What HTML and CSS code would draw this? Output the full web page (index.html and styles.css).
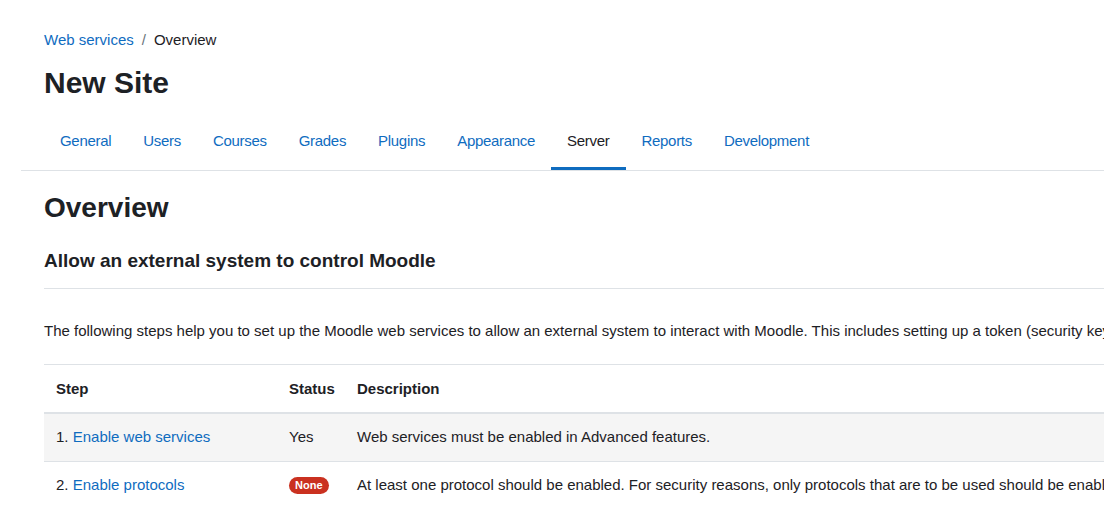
FILE: index.html
```html
<!DOCTYPE html>
<html lang="en">

<head>
    <meta charset="UTF-8">
    <meta name="viewport" content="width=device-width, initial-scale=1.0">
    <title>Web services: Overview</title>
    <link rel="stylesheet" href="styles.css">
</head>

<body>
    <div class="page-header">
        <nav class="breadcrumb">
            <a href="#">Web services</a>
            <span class="divider">/</span>
            <span>Overview</span>
        </nav>
        <h1 class="site-title">New Site</h1>
    </div>

    <div class="secondary-nav">
        <ul class="tabs">
            <li><a href="#">General</a></li>
            <li><a href="#">Users</a></li>
            <li><a href="#">Courses</a></li>
            <li><a href="#">Grades</a></li>
            <li><a href="#">Plugins</a></li>
            <li><a href="#">Appearance</a></li>
            <li><a href="#" class="active">Server</a></li>
            <li><a href="#">Reports</a></li>
            <li><a href="#">Development</a></li>
        </ul>
    </div>

    <div class="main">
        <h2 class="page-title">Overview</h2>
        <h3 class="section-title">Allow an external system to control Moodle</h3>
        <p class="intro">The following steps help you to set up the Moodle web services to allow an external system to interact with Moodle. This includes setting up a token (security key) authentication method.</p>

        <table class="steps">
            <thead>
                <tr>
                    <th class="col-step">Step</th>
                    <th class="col-status">Status</th>
                    <th>Description</th>
                </tr>
            </thead>
            <tbody>
                <tr>
                    <td>1. <a href="#">Enable web services</a></td>
                    <td class="col-status">Yes</td>
                    <td>Web services must be enabled in Advanced features.</td>
                </tr>
                <tr>
                    <td>2. <a href="#">Enable protocols</a></td>
                    <td class="col-status"><span class="badge">None</span></td>
                    <td>At least one protocol should be enabled. For security reasons, only protocols that are to be used should be enabled.</td>
                </tr>
            </tbody>
        </table>
    </div>
</body>

</html>
```

FILE: styles.css
```css
* {
    margin: 0;
    padding: 0;
    box-sizing: border-box;
}

html,
body {
    font-family: "Liberation Sans", Arial, sans-serif;
    font-size: 15px;
    line-height: 1.5;
    color: #1d2125;
    background: #fff;
    overflow: hidden;
}

a {
    color: #0f6cbf;
    text-decoration: none;
}

.page-header {
    padding: 29px 0 0 44px;
}

.breadcrumb {
    display: flex;
    gap: 8px;
    white-space: nowrap;
}

.breadcrumb .divider {
    color: #6a737b;
}

.site-title {
    font-size: 30px;
    font-weight: 700;
    line-height: 1.2;
    margin-top: 13px;
}

.secondary-nav {
    margin: 21px 0 0 21px;
    padding-left: 23px;
    border-bottom: 1px solid #dee2e6;
}

.tabs {
    list-style: none;
    display: flex;
}

.tabs a {
    display: block;
    padding: 8px 16px 15px;
    border-bottom: 3px solid transparent;
    white-space: nowrap;
    letter-spacing: -0.3px;
}

.tabs a.active {
    color: #1d2125;
    border-bottom-color: #0f6cbf;
}

.main {
    padding-left: 44px;
}

.page-title {
    font-size: 28px;
    font-weight: 700;
    line-height: 1.2;
    margin-top: 20px;
}

.section-title {
    font-size: 19px;
    font-weight: 700;
    line-height: 1.2;
    margin-top: 25px;
    padding-bottom: 16px;
    border-bottom: 1px solid #dee2e6;
}

.intro {
    margin-top: 31px;
    white-space: nowrap;
}

.steps {
    margin-top: 21px;
    border-collapse: collapse;
    width: 1200px;
}

.steps th,
.steps td {
    text-align: left;
    padding: 12px;
    border-top: 1px solid #dee2e6;
    white-space: nowrap;
    vertical-align: top;
}

.steps th {
    font-weight: 700;
    padding-top: 13px;
    border-bottom: 2px solid #dee2e6;
}

.steps .col-step {
    width: 233px;
}

.steps .col-status {
    width: 68px;
    padding-right: 10px;
}

.steps tbody tr:nth-child(odd) {
    background: #f5f5f5;
}

.badge {
    display: inline-block;
    background: #ca3120;
    color: #fff;
    font-size: 11px;
    font-weight: 700;
    line-height: 1;
    padding: 3px 6px;
    border-radius: 10px;
    vertical-align: 1px;
}
```
